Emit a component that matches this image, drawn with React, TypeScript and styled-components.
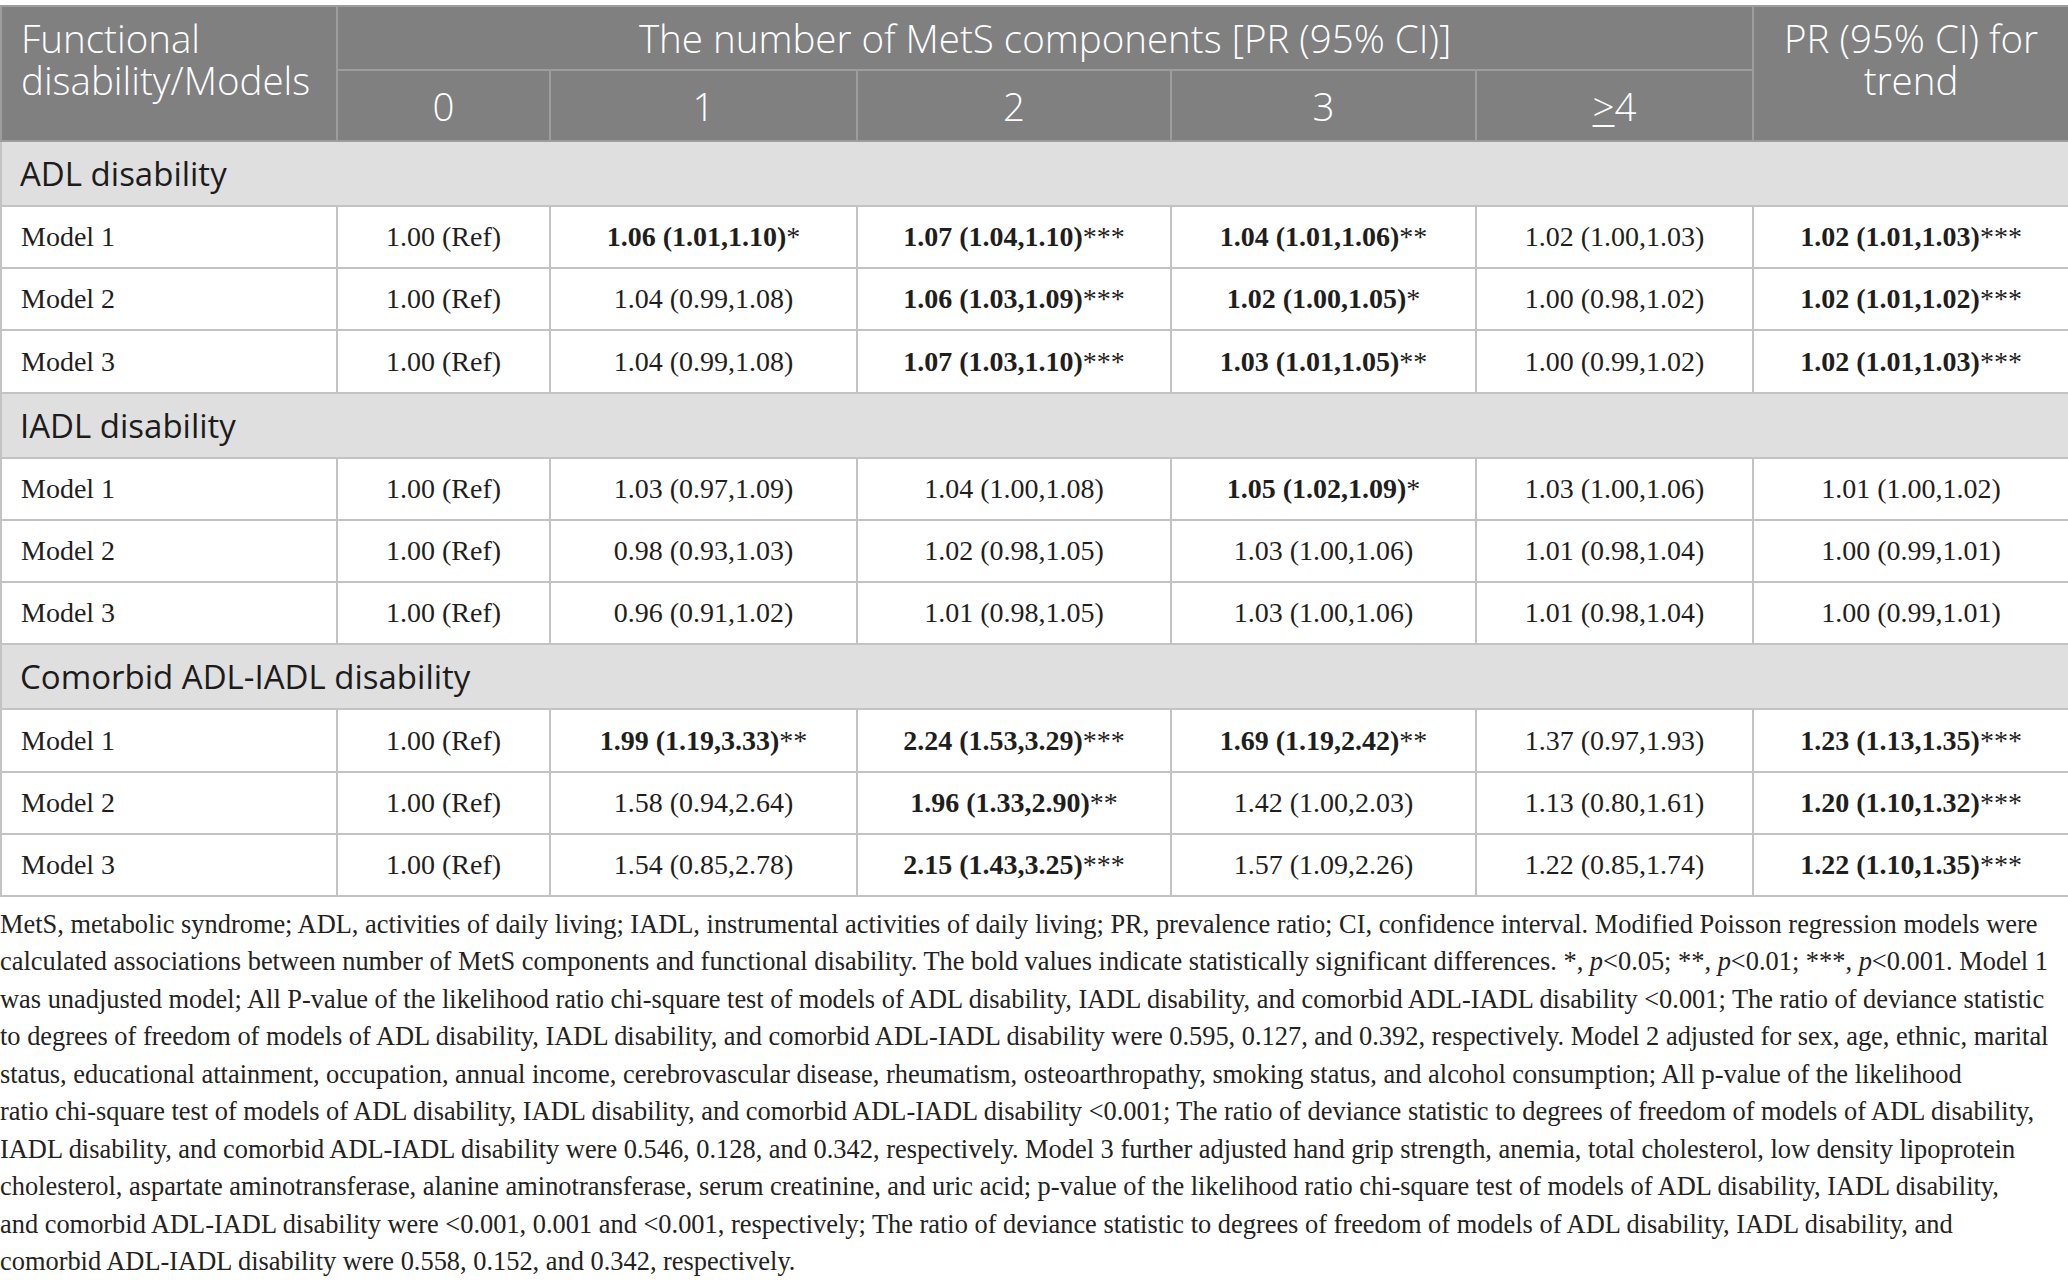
import React from "react";
import styled, { createGlobalStyle } from "styled-components";

const GlobalStyle = createGlobalStyle`
  html, body {
    margin: 0;
    padding: 0;
    background: #ffffff;
  }
`;

type Cell = { text: string; stars?: string; bold?: boolean };

interface ISection {
  title: string;
  rows: { model: string; cells: Cell[] }[];
}

const c = (text: string, stars?: string): Cell => ({ text, stars, bold: !!stars });
const p = (text: string): Cell => ({ text });
const ref = p("1.00 (Ref)");

const sections: ISection[] = [
  {
    title: "ADL disability",
    rows: [
      { model: "Model 1", cells: [ref, c("1.06 (1.01,1.10)", "*"), c("1.07 (1.04,1.10)", "***"), c("1.04 (1.01,1.06)", "**"), p("1.02 (1.00,1.03)"), c("1.02 (1.01,1.03)", "***")] },
      { model: "Model 2", cells: [ref, p("1.04 (0.99,1.08)"), c("1.06 (1.03,1.09)", "***"), c("1.02 (1.00,1.05)", "*"), p("1.00 (0.98,1.02)"), c("1.02 (1.01,1.02)", "***")] },
      { model: "Model 3", cells: [ref, p("1.04 (0.99,1.08)"), c("1.07 (1.03,1.10)", "***"), c("1.03 (1.01,1.05)", "**"), p("1.00 (0.99,1.02)"), c("1.02 (1.01,1.03)", "***")] },
    ],
  },
  {
    title: "IADL disability",
    rows: [
      { model: "Model 1", cells: [ref, p("1.03 (0.97,1.09)"), p("1.04 (1.00,1.08)"), c("1.05 (1.02,1.09)", "*"), p("1.03 (1.00,1.06)"), p("1.01 (1.00,1.02)")] },
      { model: "Model 2", cells: [ref, p("0.98 (0.93,1.03)"), p("1.02 (0.98,1.05)"), p("1.03 (1.00,1.06)"), p("1.01 (0.98,1.04)"), p("1.00 (0.99,1.01)")] },
      { model: "Model 3", cells: [ref, p("0.96 (0.91,1.02)"), p("1.01 (0.98,1.05)"), p("1.03 (1.00,1.06)"), p("1.01 (0.98,1.04)"), p("1.00 (0.99,1.01)")] },
    ],
  },
  {
    title: "Comorbid ADL-IADL disability",
    rows: [
      { model: "Model 1", cells: [ref, c("1.99 (1.19,3.33)", "**"), c("2.24 (1.53,3.29)", "***"), c("1.69 (1.19,2.42)", "**"), p("1.37 (0.97,1.93)"), c("1.23 (1.13,1.35)", "***")] },
      { model: "Model 2", cells: [ref, p("1.58 (0.94,2.64)"), c("1.96 (1.33,2.90)", "**"), p("1.42 (1.00,2.03)"), p("1.13 (0.80,1.61)"), c("1.20 (1.10,1.32)", "***")] },
      { model: "Model 3", cells: [ref, p("1.54 (0.85,2.78)"), c("2.15 (1.43,3.25)", "***"), p("1.57 (1.09,2.26)"), p("1.22 (0.85,1.74)"), c("1.22 (1.10,1.35)", "***")] },
    ],
  },
];

const colWidths = [336, 213, 307, 314, 305, 277, 316];

const notes: React.ReactNode[] = [
  "MetS, metabolic syndrome; ADL, activities of daily living; IADL, instrumental activities of daily living; PR, prevalence ratio; CI, confidence interval. Modified Poisson regression models were",
  <>
    calculated associations between number of MetS components and functional disability. The bold values indicate statistically significant differences. *, <i>p</i>&lt;0.05; **, <i>p</i>&lt;0.01; ***, <i>p</i>&lt;0.001. Model 1
  </>,
  "was unadjusted model; All P-value of the likelihood ratio chi-square test of models of ADL disability, IADL disability, and comorbid ADL-IADL disability <0.001; The ratio of deviance statistic",
  "to degrees of freedom of models of ADL disability, IADL disability, and comorbid ADL-IADL disability were 0.595, 0.127, and 0.392, respectively. Model 2 adjusted for sex, age, ethnic, marital",
  "status, educational attainment, occupation, annual income, cerebrovascular disease, rheumatism, osteoarthropathy, smoking status, and alcohol consumption; All p-value of the likelihood",
  "ratio chi-square test of models of ADL disability, IADL disability, and comorbid ADL-IADL disability <0.001; The ratio of deviance statistic to degrees of freedom of models of ADL disability,",
  "IADL disability, and comorbid ADL-IADL disability were 0.546, 0.128, and 0.342, respectively. Model 3 further adjusted hand grip strength, anemia, total cholesterol, low density lipoprotein",
  "cholesterol, aspartate aminotransferase, alanine aminotransferase, serum creatinine, and uric acid; p-value of the likelihood ratio chi-square test of models of ADL disability, IADL disability,",
  "and comorbid ADL-IADL disability were <0.001, 0.001 and <0.001, respectively; The ratio of deviance statistic to degrees of freedom of models of ADL disability, IADL disability, and",
  "comorbid ADL-IADL disability were 0.558, 0.152, and 0.342, respectively.",
];

const App: React.FC = () => {
  return (
    <Page>
      <GlobalStyle />
      <Table>
        <colgroup>
          {colWidths.map((w, i) => (
            <col key={i} style={{ width: w }} />
          ))}
        </colgroup>
        <thead>
          <HeadRow $h={64}>
            <HeadCell rowSpan={2} $align="left" $top>
              Functional
              <br />
              disability/Models
            </HeadCell>
            <HeadCell colSpan={5}>The number of MetS components [PR (95% CI)]</HeadCell>
            <HeadCell rowSpan={2} $top>
              PR (95% CI) for
              <br />
              trend
            </HeadCell>
          </HeadRow>
          <HeadRow $h={71}>
            <HeadCell>0</HeadCell>
            <HeadCell>1</HeadCell>
            <HeadCell>2</HeadCell>
            <HeadCell>3</HeadCell>
            <HeadCell>
              <Ge>&gt;</Ge>4
            </HeadCell>
          </HeadRow>
        </thead>
        <tbody>
          {sections.map((section) => (
            <React.Fragment key={section.title}>
              <SectionRow>
                <SectionCell colSpan={7}>{section.title}</SectionCell>
              </SectionRow>
              {section.rows.map((row) => (
                <BodyRow key={row.model}>
                  <BodyCell $align="left">{row.model}</BodyCell>
                  {row.cells.map((cell, i) => (
                    <BodyCell key={i}>
                      {cell.bold ? <b>{cell.text}</b> : cell.text}
                      {cell.stars}
                    </BodyCell>
                  ))}
                </BodyRow>
              ))}
            </React.Fragment>
          ))}
        </tbody>
      </Table>
      <Footnote>
        {notes.map((line, i) => (
          <NoteLine key={i}>{line}</NoteLine>
        ))}
      </Footnote>
    </Page>
  );
};

export default App;

const Page = styled.div`
  width: 2068px;
  padding-top: 5px;
`;

const Table = styled.table`
  width: 2068px;
  border-collapse: collapse;
  table-layout: fixed;
`;

const HeadRow = styled.tr<{ $h: number }>`
  height: ${(p) => p.$h}px;
`;

const HeadCell = styled.th<{ $align?: "left" | "center"; $top?: boolean }>`
  background: #7f807f;
  color: #ffffff;
  font-family: "Open Sans", "Noto Sans", sans-serif;
  font-weight: 300;
  font-size: 38.5px;
  line-height: 42px;
  text-align: ${(p) => p.$align ?? "center"};
  vertical-align: ${(p) => (p.$top ? "top" : "middle")};
  padding: ${(p) => (p.$top ? "10px" : "0")} ${(p) => (p.$align === "left" ? "19px" : "0")} 0;
  border: 2px solid #9c9d9c;
  white-space: nowrap;
`;

const Ge = styled.span`
  text-decoration: underline;
  text-underline-offset: 4px;
  text-decoration-thickness: 2px;
`;

const SectionRow = styled.tr`
  height: 65.3px;
`;

const SectionCell = styled.td`
  background: #e0dfe0;
  color: #1c1c1c;
  font-family: "Open Sans", "Noto Sans", sans-serif;
  font-size: 33px;
  padding: 0 18px;
  border: 2px solid #c3c3c3;
`;

const BodyRow = styled.tr`
  height: 62.1px;
`;

const BodyCell = styled.td<{ $align?: "left" | "center" }>`
  font-family: "Liberation Serif", "Times New Roman", serif;
  font-size: 28px;
  color: #1e1e1e;
  text-align: ${(p) => p.$align ?? "center"};
  padding: 0 ${(p) => (p.$align === "left" ? "19px" : "0")};
  border: 2px solid #c3c3c3;
  white-space: nowrap;
`;

const Footnote = styled.div`
  margin-top: 9px;
  font-family: "Liberation Serif", "Times New Roman", serif;
  font-size: 26.4px;
  line-height: 37.5px;
  color: #222222;
`;

const NoteLine = styled.div`
  white-space: nowrap;
`;
